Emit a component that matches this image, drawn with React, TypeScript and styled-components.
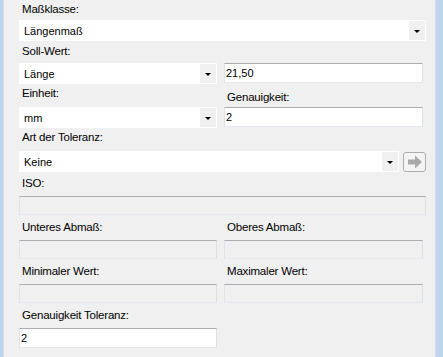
import styled, { createGlobalStyle } from 'styled-components';

const GlobalStyle = createGlobalStyle`
    html, body {
        margin: 0;
        padding: 0;
        background-color: #f0f0f0;
        overflow: hidden;
    }
`;

const Window = styled.div`
    width: 443px;
    height: 357px;
    box-sizing: border-box;
    display: flex;
    border-left: 3px solid #bed4ec;
    border-right: 8px solid #bed4ec;
    font-family: "Liberation Sans", Arial, sans-serif;
`;
const Panel = styled.div`
    flex: 1;
    border-left: 1px solid #d9dde3;
    border-right: 1px solid #d9dde3;
    background-color: #f0f0f0;
    padding: 2px 9px 0 15px;
    display: flex;
    flex-direction: column;
`;
const Row = styled.div<{ $top?: number }>`
    display: grid;
    grid-template-columns: 198px 199px;
    column-gap: 7px;
    margin-top: ${(p) => p.$top ?? 0}px;
`;
const Field = styled.div`
    display: flex;
    flex-direction: column;
`;
const Label = styled.span<{ $top?: number; $bottom?: number }>`
    display: block;
    font-size: 11.5px;
    letter-spacing: -0.2px;
    line-height: 15px;
    color: #000;
    padding-left: 3px;
    margin-top: ${(p) => p.$top ?? 0}px;
    margin-bottom: ${(p) => p.$bottom ?? 3}px;
    white-space: nowrap;
`;
const ComboBox = styled.div<{ $width?: number }>`
    width: ${(p) => (p.$width ? `${p.$width}px` : '100%')};
    height: 21px;
    box-sizing: border-box;
    display: flex;
    align-items: stretch;
    background-color: #ffffff;
    border: 1px solid #ffffff;
    span {
        flex: 1;
        font-size: 11px;
        line-height: 19px;
        padding: 1px 0 0 4px;
        color: #000;
    }
`;
const DropButton = styled.div`
    width: 16px;
    display: flex;
    align-items: center;
    justify-content: center;
    background-color: #f0f0f0;
    &::after {
        content: '';
        border-left: 3px solid transparent;
        border-right: 3px solid transparent;
        border-top: 3px solid #000;
        margin-top: 1px;
    }
`;
const TextBox = styled.div<{ $disabled?: boolean }>`
    height: ${(p) => (p.$disabled ? 19 : 20)}px;
    box-sizing: border-box;
    background-color: ${(p) => (p.$disabled ? '#f0f0f0' : '#ffffff')};
    border-top: 1px solid #abadb3;
    border-left: 1px solid #e2e3ea;
    border-right: 1px solid #dbdfe6;
    border-bottom: 1px solid #e3e9ef;
    font-size: 11px;
    line-height: 18px;
    padding-left: 1px;
    color: #000;
`;
const ComboLine = styled.div`
    display: flex;
    align-items: center;
    gap: 4px;
`;
const ArrowButton = styled.div`
    width: 23px;
    height: 20px;
    box-sizing: border-box;
    border: 1px solid #adadad;
    border-radius: 3px;
    background-color: #f4f4f4;
    display: flex;
    align-items: center;
    justify-content: center;
`;

const Combo = ({ value, width }: { value: string; width?: number }) => (
    <ComboBox $width={width}>
        <span>{value}</span>
        <DropButton />
    </ComboBox>
);

const App = () => {
    return (
        <>
            <GlobalStyle />
            <Window>
                <Panel>
                    <Label>Maßklasse:</Label>
                    <Combo value='Längenmaß' />

                    <Label $top={3} $bottom={4}>Soll-Wert:</Label>
                    <Row>
                        <Combo value='Länge' />
                        <TextBox>21,50</TextBox>
                    </Row>

                    <Row $top={2}>
                        <Field>
                            <Label $bottom={6}>Einheit:</Label>
                            <Combo value='mm' />
                        </Field>
                        <Field>
                            <Label $top={4} $bottom={2}>Genauigkeit:</Label>
                            <TextBox>2</TextBox>
                        </Field>
                    </Row>

                    <Label $top={2} $bottom={6}>Art der Toleranz:</Label>
                    <ComboLine>
                        <Combo value='Keine' width={380} />
                        <ArrowButton>
                            <svg width='16' height='14' viewBox='0 0 16 14'>
                                <path d='M1 4.5h7v-4l7 6.5-7 6.5v-4h-7z' fill='#a9a9a9' />
                            </svg>
                        </ArrowButton>
                    </ComboLine>

                    <Label $top={4} $bottom={5}>ISO:</Label>
                    <TextBox $disabled />

                    <Row $top={5}>
                        <Field>
                            <Label $bottom={5}>Unteres Abmaß:</Label>
                            <TextBox $disabled />
                        </Field>
                        <Field>
                            <Label $bottom={5}>Oberes Abmaß:</Label>
                            <TextBox $disabled />
                        </Field>
                    </Row>

                    <Row $top={5}>
                        <Field>
                            <Label $bottom={5}>Minimaler Wert:</Label>
                            <TextBox $disabled />
                        </Field>
                        <Field>
                            <Label $bottom={5}>Maximaler Wert:</Label>
                            <TextBox $disabled />
                        </Field>
                    </Row>

                    <Row $top={5}>
                        <Field>
                            <Label $bottom={5}>Genauigkeit Toleranz:</Label>
                            <TextBox>2</TextBox>
                        </Field>
                    </Row>
                </Panel>
            </Window>
        </>
    );
}
export default App;
